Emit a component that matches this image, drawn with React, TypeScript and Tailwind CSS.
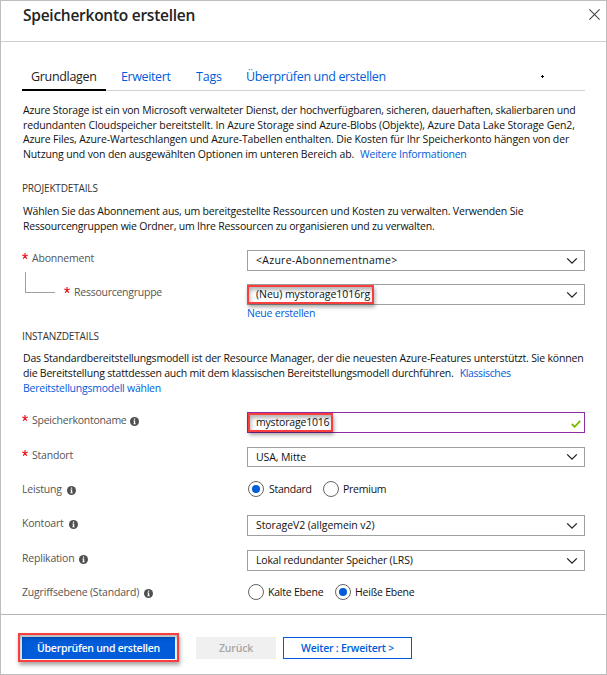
import type { ReactNode } from "react";

function InfoIcon() {
  return (
    <svg viewBox="0 0 9 9" className="mt-[4px] h-[9px] w-[9px] shrink-0">
      <circle cx="4.5" cy="4.5" r="4.5" fill="#4f4f4f" />
      <path d="M3.4 3.6H5.2V6.4H5.8V7.2H3.3V6.4H3.9V4.4H3.4ZM3.9 1.6H5.2V2.8H3.9Z" fill="#fff" />
    </svg>
  );
}

function Chevron() {
  return (
    <svg viewBox="0 0 12 8" className="mr-[6px] h-2 w-3 shrink-0" fill="none" stroke="#222" strokeWidth="1.3">
      <path d="M1.2 1.4L6 6.2L10.8 1.4" />
    </svg>
  );
}

function Star() {
  return (
    <svg viewBox="0 0 6 6" className="mt-[2px] h-[6px] w-[6px] shrink-0" stroke="#ec1c24" strokeWidth="1.2">
      <path d="M3 0V3M0.2 2L3 3L5.8 2M1.2 5.8L3 3L4.8 5.8" fill="none" />
    </svg>
  );
}

function Radio({ checked, children }: { checked?: boolean; children: ReactNode }) {
  return (
    <div className="flex h-[16px] items-center">
      <span className="flex h-4 w-4 shrink-0 items-center justify-center rounded-full border border-[#666]">
        {checked && <span className="h-2 w-2 rounded-full bg-[#015cda]" />}
      </span>
      {children}
    </div>
  );
}

function Label({ required, info, children }: { required?: boolean; info?: boolean; children: ReactNode }) {
  return (
    <div className="flex h-[15px] text-[#555]">
      {required && (
        <span className="mr-[4px] flex">
          <Star />
        </span>
      )}
      {children}
      {info && (
        <span className={required ? "ml-[3px]" : "ml-[5px]"}>
          <InfoIcon />
        </span>
      )}
    </div>
  );
}

function Row({ label, className, labelClass, children }: { label: ReactNode; className: string; labelClass: string; children: ReactNode }) {
  return (
    <div className={`flex ${className}`}>
      <div className={`w-[225px] shrink-0 ${labelClass}`}>{label}</div>
      <div className="w-[338px]">{children}</div>
    </div>
  );
}

function Select({ className, children }: { className: string; children: ReactNode }) {
  return (
    <div className={`relative flex w-full items-center justify-between border border-[#a0a0a0] pl-2 ${className}`}>
      {children}
      <Chevron />
    </div>
  );
}

const highlight =
  "absolute border-2 border-[#f93e3e] shadow-[1px_3px_4px_rgba(0,0,0,0.35),inset_1px_3px_4px_rgba(0,0,0,0.3)]";

export default function App() {
  return (
    <div className="flex h-[675px] w-[607px] flex-col overflow-hidden whitespace-nowrap border border-[#bdbdbd] bg-white font-['Open_Sans',sans-serif] text-[10.5px] leading-[15px] text-[#111]">
      <header className="flex h-[41px] shrink-0 justify-between border-b border-[#cfcfcf] pl-[22px] pr-[6px]">
        <h1 className="pt-[3px] text-[15.5px] font-semibold leading-[22px] tracking-[-0.26px] text-[#222]">
          Speicherkonto erstellen
        </h1>
        <svg viewBox="0 0 11 11" className="mt-2 h-[11px] w-[11px]" stroke="#444" strokeWidth="1.1">
          <path d="M0.4 0.4L10.6 10.6M10.6 0.4L0.4 10.6" />
        </svg>
      </header>

      <main className="h-[572px] shrink-0 pl-[21px] pt-[24px]">
        <nav className="flex h-[25px] w-[563px] border-b border-[#d2d2d2] text-[12.5px] leading-[22px] text-[#015cda]">
          <span className="h-[25px] w-[84px] border-b-2 border-black pl-[9px] tracking-[-0.32px] text-[#222]">Grundlagen</span>
          <span className="w-[75px] pl-[15px] tracking-[-0.39px]">Erweitert</span>
          <span className="w-[50px] pl-[15px] tracking-[-0.2px]">Tags</span>
          <span className="pl-[15px] tracking-[-0.35px]">Überprüfen und erstellen</span>
          <svg viewBox="0 0 3 3" className="ml-[155px] mt-[9px] h-[3px] w-[3px]">
            <path d="M1 0H2V1H3V2H2V3H1V2H0V1H1Z" fill="#000" />
          </svg>
        </nav>

        <div className="mt-[12px] h-[78px] pl-px leading-[14.7px]">
          <p className="tracking-[-0.177px]">
            Azure Storage ist ein von Microsoft verwalteter Dienst, der hochverfügbaren, sicheren, dauerhaften, skalierbaren und
          </p>
          <p className="tracking-[-0.133px]">
            redundanten Cloudspeicher bereitstellt. In Azure Storage sind Azure-Blobs (Objekte), Azure Data Lake Storage Gen2,
          </p>
          <p className="tracking-[-0.132px]">
            Azure Files, Azure-Warteschlangen und Azure-Tabellen enthalten. Die Kosten für Ihr Speicherkonto hängen von der
          </p>
          <p className="flex gap-[6px] tracking-[-0.137px]">
            Nutzung und von den ausgewählten Optionen im unteren Bereich ab.
            <a className="tracking-[-0.23px] text-[#015cda]">Weitere Informationen</a>
          </p>
        </div>

        <h2 className="h-[23px] text-[10px] tracking-[-0.16px] text-[#333]">PROJEKTDETAILS</h2>
        <div className="h-[46px] pl-px">
          <p className="tracking-[-0.16px]">
            Wählen Sie das Abonnement aus, um bereitgestellte Ressourcen und Kosten zu verwalten. Verwenden Sie
          </p>
          <p className="tracking-[-0.194px]">
            Ressourcengruppen wie Ordner, um Ihre Ressourcen zu organisieren und zu verwalten.
          </p>
        </div>

        <Row className="h-[35px]" labelClass="pt-px" label={<Label required><span className="tracking-[-0.2px]">Abonnement</span></Label>}>
          <Select className="h-[21px]">
            <span className="tracking-[0.28px]">{"<Azure-Abonnementname>"}</span>
          </Select>
        </Row>
        <Row
          className="h-[44px]"
          labelClass="flex"
          label={
            <>
              <span className="-mt-[13px] ml-[3px] mr-[9px] h-[21px] w-[30px] border-b border-l border-[#a0a0a0]" />
              <Label required><span className="tracking-[-0.25px]">Ressourcengruppe</span></Label>
            </>
          }
        >
          <Select className="-mt-px h-[21px]">
            <span className="tracking-[-0.04px]">(Neu) mystorage1016rg</span>
            <span className={`${highlight} -left-px top-0 h-[19px] w-[127px]`} />
          </Select>
          <a className="mt-px block tracking-[-0.22px] text-[#015cda]">Neue erstellen</a>
        </Row>

        <h2 className="h-[22px] text-[10px] tracking-[-0.16px] text-[#333]">INSTANZDETAILS</h2>
        <div className="h-[62px] pl-px">
          <p className="tracking-[-0.183px]">
            Das Standardbereitstellungsmodell ist der Resource Manager, der die neuesten Azure-Features unterstützt. Sie können
          </p>
          <p className="flex gap-[6px] tracking-[-0.21px]">
            die Bereitstellung stattdessen auch mit dem klassischen Bereitstellungsmodell durchführen.
            <a className="tracking-[-0.36px] text-[#015cda]">Klassisches</a>
          </p>
          <p className="tracking-[-0.236px] text-[#015cda]">Bereitstellungsmodell wählen</p>
        </div>

        <Row className="h-[35px]" labelClass="" label={<Label required info><span className="tracking-[-0.24px]">Speicherkontoname</span></Label>}>
          <div className="relative -mt-px flex h-[21px] items-center justify-between border border-[#8a2da5] pl-2 pr-[3px]">
            <span className="tracking-[-0.18px]">mystorage1016</span>
            <span className={`${highlight} left-0 top-0 h-[19px] w-[85px]`} />
            <svg viewBox="0 0 10 8" className="mt-[2px] h-2 w-[10px]" fill="none" stroke="#77b900" strokeWidth="1.8">
              <path d="M0.8 4L3.6 6.8L9.2 0.8" />
            </svg>
          </div>
        </Row>
        <Row className="h-[33px]" labelClass="" label={<Label required><span className="tracking-[-0.2px]">Standort</span></Label>}>
          <Select className="-mt-px h-[20px]">
            <span className="tracking-[-0.1px]">USA, Mitte</span>
          </Select>
        </Row>
        <Row className="h-[35px]" labelClass="pt-px" label={<Label info><span className="tracking-[-0.2px]">Leistung</span></Label>}>
          <div className="flex gap-[11px] pl-px">
            <Radio checked><span className="ml-[5px] w-[43px] tracking-[-0.25px]">Standard</span></Radio>
            <Radio><span className="ml-[4px] tracking-[-0.25px]">Premium</span></Radio>
          </div>
        </Row>
        <Row className="h-[35px]" labelClass="" label={<Label info><span className="tracking-[-0.2px]">Kontoart</span></Label>}>
          <Select className="-mt-px h-[21px]">
            <span className="tracking-[-0.07px]">StorageV2 (allgemein v2)</span>
          </Select>
        </Row>
        <Row className="h-[34px]" labelClass="" label={<Label info><span className="tracking-[-0.2px]">Replikation</span></Label>}>
          <Select className="-mt-px h-[21px]">
            <span className="tracking-[-0.18px]">Lokal redundanter Speicher (LRS)</span>
          </Select>
        </Row>
        <Row className="h-[20px]" labelClass="" label={<Label info><span className="tracking-[-0.18px]">Zugriffsebene (Standard)</span></Label>}>
          <div className="-mt-px flex gap-[11px] pl-px">
            <Radio><span className="ml-[4px] w-[56px] tracking-[-0.22px]">Kalte Ebene</span></Radio>
            <Radio checked><span className="ml-[4px] tracking-[-0.22px]">Heiße Ebene</span></Radio>
          </div>
        </Row>
      </main>

      <footer className="flex grow border-t border-[#b5b5b5] pl-[21px] pt-[22px] font-semibold leading-[22px]">
        <button className="relative h-[22px] w-[153px] bg-[#015cda] text-center tracking-[-0.25px] text-white">
          Überprüfen und erstellen
          <span className={`${highlight} -left-1 -top-1 h-[29px] w-[161px]`} />
        </button>
        <button className="ml-[21px] h-[22px] w-[80px] bg-[#f0f0f0] tracking-[-0.2px] text-[#a6a6a6]">Zurück</button>
        <button className="ml-[7px] h-[22px] w-[129px] border border-[#015cda] leading-[20px] tracking-[-0.23px] text-[#015cda]">
          {"Weiter : Erweitert >"}
        </button>
      </footer>
    </div>
  );
}
